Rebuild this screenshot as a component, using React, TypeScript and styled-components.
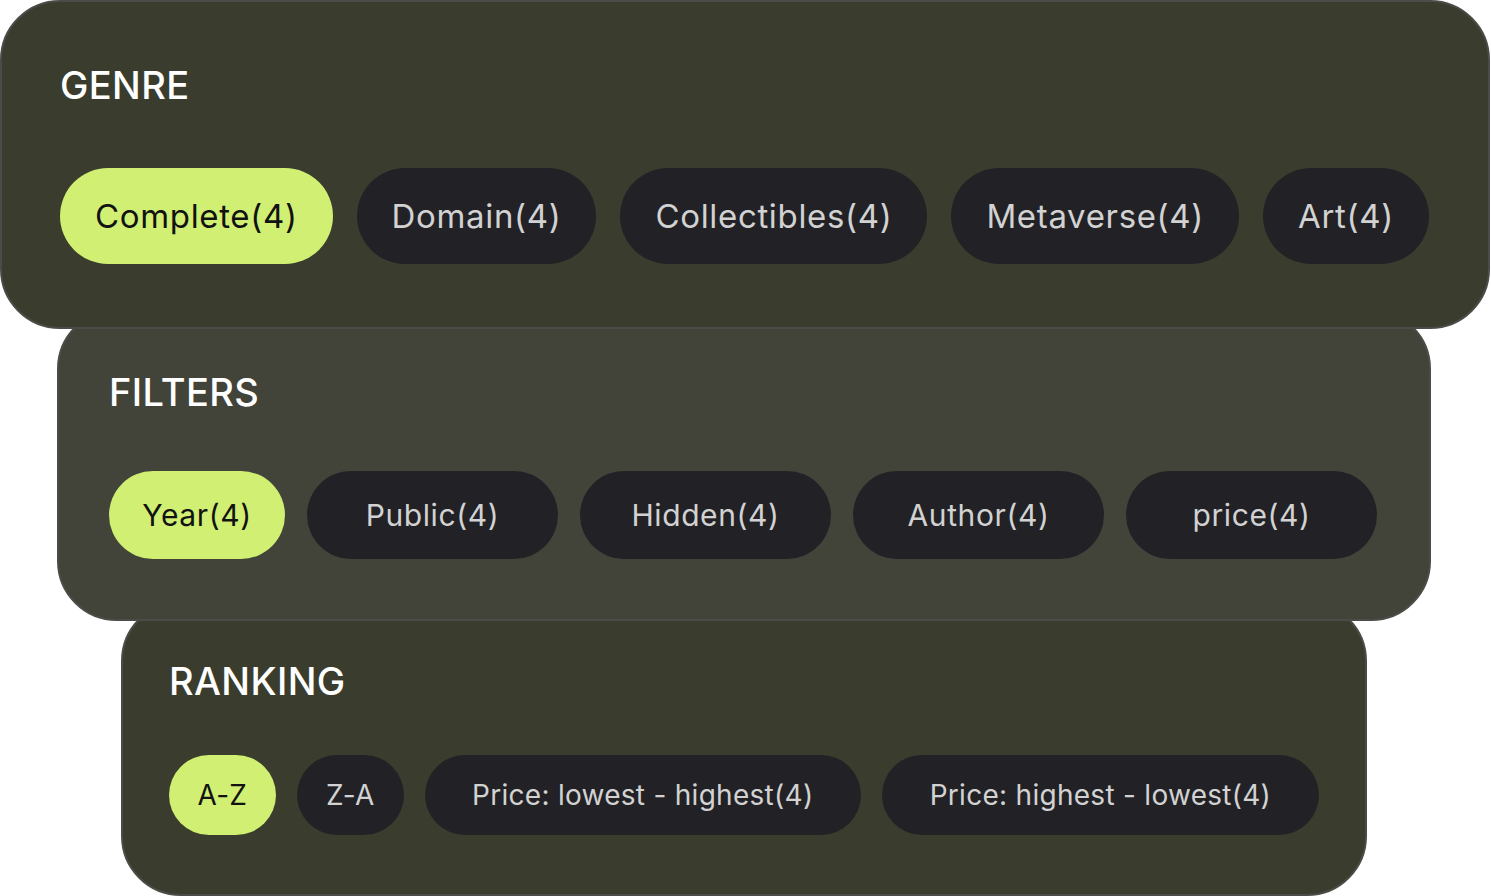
import React from 'react';
import styled, { createGlobalStyle } from 'styled-components';

const GlobalStyle = createGlobalStyle`
  html, body {
    margin: 0;
    padding: 0;
    background: #ffffff;
    font-family: Inter, "Noto Sans", sans-serif;
  }
`;

interface Chip {
  label: string;
  width?: number;
}

interface Section {
  title: string;
  chips: Chip[];
}

const GENRE: Section = {
  title: 'GENRE',
  chips: [
    { label: 'Complete(4)' },
    { label: 'Domain(4)' },
    { label: 'Collectibles(4)' },
    { label: 'Metaverse(4)' },
    { label: 'Art(4)' },
  ],
};

const FILTERS: Section = {
  title: 'FILTERS',
  chips: [
    { label: 'Year(4)', width: 176 },
    { label: 'Public(4)', width: 251 },
    { label: 'Hidden(4)', width: 251 },
    { label: 'Author(4)', width: 251 },
    { label: 'price(4)', width: 251 },
  ],
};

const RANKING: Section = {
  title: 'RANKING',
  chips: [
    { label: 'A-Z', width: 107 },
    { label: 'Z-A', width: 107 },
    { label: 'Price: lowest - highest(4)', width: 437 },
    { label: 'Price: highest - lowest(4)', width: 438 },
  ],
};

// --- Styled Components ---
const Stack = styled.div`
  display: flex;
  flex-direction: column;
  align-items: flex-start;
  width: 1491px;
`;

const Card = styled.section<{ $width: number; $offset: number; $bg: string; $pad: string; $layer: number; $overlap: boolean }>`
  position: relative;
  z-index: ${p => p.$layer};
  box-sizing: border-box;
  width: ${p => p.$width}px;
  margin-left: ${p => p.$offset}px;
  margin-top: ${p => (p.$overlap ? '-20px' : '0')};
  padding: ${p => p.$pad};
  background: ${p => p.$bg};
  border: 2px solid #4b4c47;
  border-radius: 60px;
  display: flex;
  flex-direction: column;
`;

const Title = styled.h2<{ $gap: number }>`
  margin: 0 0 ${p => p.$gap}px;
  font-family: Inter, "Noto Sans", sans-serif;
  font-size: 38px;
  line-height: 44px;
  font-weight: 500;
  color: #ffffff;
  letter-spacing: 0.01em;
`;

const ChipRow = styled.div<{ $gap: number }>`
  display: flex;
  align-items: center;
  gap: ${p => p.$gap}px;
`;

const Pill = styled.button<{ $active: boolean; $height: number; $size: number; $spacing: number; $width?: number }>`
  box-sizing: border-box;
  height: ${p => p.$height}px;
  ${p => (p.$width ? `width: ${p.$width}px;` : 'padding: 0 35px;')}
  border: none;
  border-radius: 999px;
  background: ${p => (p.$active ? '#d1ef72' : '#222226')};
  color: ${p => (p.$active ? '#121212' : '#d2d2d2')};
  font-family: Inter, "Noto Sans", sans-serif;
  font-size: ${p => p.$size}px;
  font-weight: 400;
  letter-spacing: ${p => p.$spacing}em;
  white-space: nowrap;
  display: inline-flex;
  align-items: center;
  justify-content: center;
  cursor: pointer;
`;

// --- Component ---
const ChipGroup = ({ section, height, size, spacing, gap }: { section: Section; height: number; size: number; spacing: number; gap: number }) => (
  <ChipRow $gap={gap}>
    {section.chips.map((c, i) => (
      <Pill key={c.label} $active={i === 0} $height={height} $size={size} $spacing={spacing} $width={c.width}>
        {c.label}
      </Pill>
    ))}
  </ChipRow>
);

const App = () => (
  <>
    <GlobalStyle />
    <Stack>
      <Card $width={1490} $offset={0} $bg="#3a3d2d" $pad="61px 58px 63px" $layer={3} $overlap={false}>
        <Title $gap={61}>{GENRE.title}</Title>
        <ChipGroup section={GENRE} height={96} size={33} spacing={0.02} gap={24} />
      </Card>
      <Card $width={1374} $offset={57} $bg="#42443a" $pad="59px 50px 60px" $layer={2} $overlap>
        <Title $gap={57}>{FILTERS.title}</Title>
        <ChipGroup section={FILTERS} height={88} size={30} spacing={0.02} gap={22} />
      </Card>
      <Card $width={1246} $offset={121} $bg="#3a3d2d" $pad="56px 46px 59px" $layer={1} $overlap>
        <Title $gap={52}>{RANKING.title}</Title>
        <ChipGroup section={RANKING} height={80} size={28} spacing={0.01} gap={21} />
      </Card>
    </Stack>
  </>
);

export default App;
